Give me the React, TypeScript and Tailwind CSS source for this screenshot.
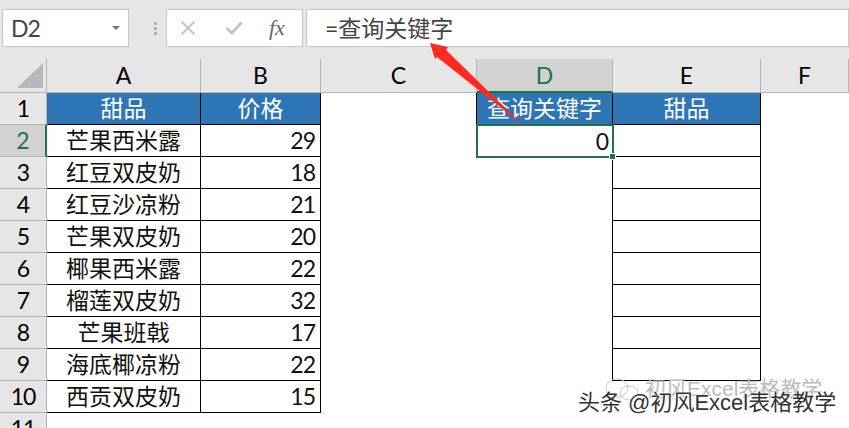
const cols = ["A", "B", "C", "D", "E", "F"];
const font = { fontFamily: '"Lato", "Noto Sans CJK SC", sans-serif' };

const rows: [string, string][] = [
  ["芒果西米露", "29"],
  ["红豆双皮奶", "18"],
  ["红豆沙凉粉", "21"],
  ["芒果双皮奶", "20"],
  ["椰果西米露", "22"],
  ["榴莲双皮奶", "32"],
  ["芒果班戟", "17"],
  ["海底椰凉粉", "22"],
  ["西贡双皮奶", "15"],
];

function RowHead({ n, active }: { n: number; active?: boolean }) {
  return (
    <div
      className={`flex items-center justify-center border-b border-b-[#b4b4b4] tracking-[-1px] ${
        active ? "border-r-2 border-r-[#217346] bg-[#d2d2d2] text-[#217346]" : "border-r border-r-[#b4b4b4] bg-[#e6e6e6] text-black"
      }`}
    >
      {n}
    </div>
  );
}

function HeadCell({ text }: { text: string }) {
  return (
    <div className="flex items-center justify-center border-b border-r border-black bg-[#2e75b6] text-white">{text}</div>
  );
}

export default function App() {
  return (
    <div className="relative h-[428px] w-[849px] overflow-hidden bg-white text-[23px] leading-none" style={font}>
      <div className="flex h-[59px] items-start bg-[#e6e6e6] pt-[9px]">
        <div className="ml-[2px] flex h-[38px] w-[127px] items-center justify-between border border-[#c8c8c8] bg-white px-[8px] text-[#444]">
          <span className="tracking-[-1px]">D2</span>
          <span className="h-0 w-0 border-x-[4px] border-t-[4px] border-x-transparent border-t-[#777]" />
        </div>
        <div className="ml-[15px] flex h-[38px] w-[22px] flex-col items-center justify-center gap-[2px]">
          <span className="h-[3px] w-[3px] bg-[#b0b0b0]" />
          <span className="h-[3px] w-[3px] bg-[#b0b0b0]" />
          <span className="h-[3px] w-[3px] bg-[#b0b0b0]" />
        </div>
        <div className="flex h-[38px] w-[137px] items-center border border-[#c8c8c8] bg-white">
          <svg className="ml-[13px]" width="16" height="16" viewBox="0 0 16 16" fill="none" stroke="#c4c4c4" strokeWidth="1.8">
            <path d="M1.5 1.5 L14.5 14.5 M14.5 1.5 L1.5 14.5" />
          </svg>
          <svg className="ml-[29px]" width="18" height="16" viewBox="0 0 18 16" fill="none" stroke="#c4c4c4" strokeWidth="3">
            <path d="M1.5 8 L7 13 L16.5 2.5" />
          </svg>
          <span className="ml-[26px] font-['Liberation_Serif'] text-[22px] italic text-[#666]">fx</span>
        </div>
        <div className="ml-[3px] flex h-[38px] flex-1 items-center border border-[#c8c8c8] bg-white pl-[18px] text-[#444]">
          =查询关键字
        </div>
      </div>

      <div className="grid grid-cols-[47px_154px_120px_156px_136px_148px_1fr] grid-rows-[34px_repeat(11,32px)]">
        <div className="relative border-b border-r border-[#b4b4b4] bg-[#e6e6e6]">
          <svg className="absolute bottom-[4px] right-[3px]" width="26" height="25" viewBox="0 0 26 25">
            <path d="M26 0 V25 H0 Z" fill="#b8b8b8" />
          </svg>
        </div>
        {cols.map((c) => (
          <div
            key={c}
            className={`flex items-center justify-center border-r border-[#b4b4b4] ${
              c === "D"
                ? "border-b-2 border-b-[#217346] bg-[#d2d2d2] text-[#217346]"
                : "border-b bg-[#e6e6e6] text-black"
            }`}
          >
            {c}
          </div>
        ))}

        <RowHead n={1} />
        <HeadCell text="甜品" />
        <HeadCell text="价格" />
        <div />
        <div className="-ml-px flex items-center justify-center border-b border-l border-r border-black bg-[#2e75b6] text-white">
          查询关键字
        </div>
        <HeadCell text="甜品" />
        <div />

        {rows.map(([name, price], i) => (
          <div key={name} className="contents">
            <RowHead n={i + 2} active={i === 0} />
            <div className="flex items-center justify-center border-b border-r border-black text-[#111]">{name}</div>
            <div className="flex items-center justify-end border-b border-r border-black pr-[5px] tracking-[-1px] text-[#111]">
              {price}
            </div>
            <div />
            {i === 0 ? (
              <div className="relative z-10 -my-px -ml-px -mr-px flex items-center justify-end border-2 border-[#217346] pr-[3px] text-[#111]">
                0
                <span className="absolute bottom-[-4px] right-[-4px] h-[7px] w-[7px] border border-white bg-[#217346]" />
              </div>
            ) : (
              <div className={i < 8 ? "border-r border-black" : ""} />
            )}
            <div className={i < 8 ? "border-b border-r border-black" : ""} />
            <div />
          </div>
        ))}

        <RowHead n={11} />
      </div>

      {/* red arrow pointing at the formula bar */}
      <svg className="absolute left-0 top-0 z-20" width="849" height="428" viewBox="0 0 849 428" fill="none">
        <path d="M430 43 L448 47 L446 50 L525 127 L437 57 L435 59 Z" fill="#ff2a1f" />
      </svg>

      {/* watermarks */}
      <svg className="absolute left-[604px] top-[376px]" width="38" height="28" viewBox="0 0 38 28" fill="none" stroke="#c8c8c8" strokeWidth="1">
        <ellipse cx="13" cy="12" rx="11" ry="9" />
        <ellipse cx="25" cy="17" rx="9" ry="7" />
      </svg>
      <div className="absolute left-[645px] top-[378px] font-['Liberation_Sans','Noto_Sans_CJK_SC',sans-serif] text-[21px] text-[#bbbbbb]">
        初风Excel表格教学
      </div>
      <div
        className="absolute left-[578px] top-[392px] font-['Liberation_Sans','Noto_Sans_CJK_SC',sans-serif] text-[22px] text-[#333]"
        style={{ textShadow: "0 0 2px #fff, 0 0 2px #fff, 0 0 2px #fff" }}
      >
        头条 @初风Excel表格教学
      </div>
    </div>
  );
}
